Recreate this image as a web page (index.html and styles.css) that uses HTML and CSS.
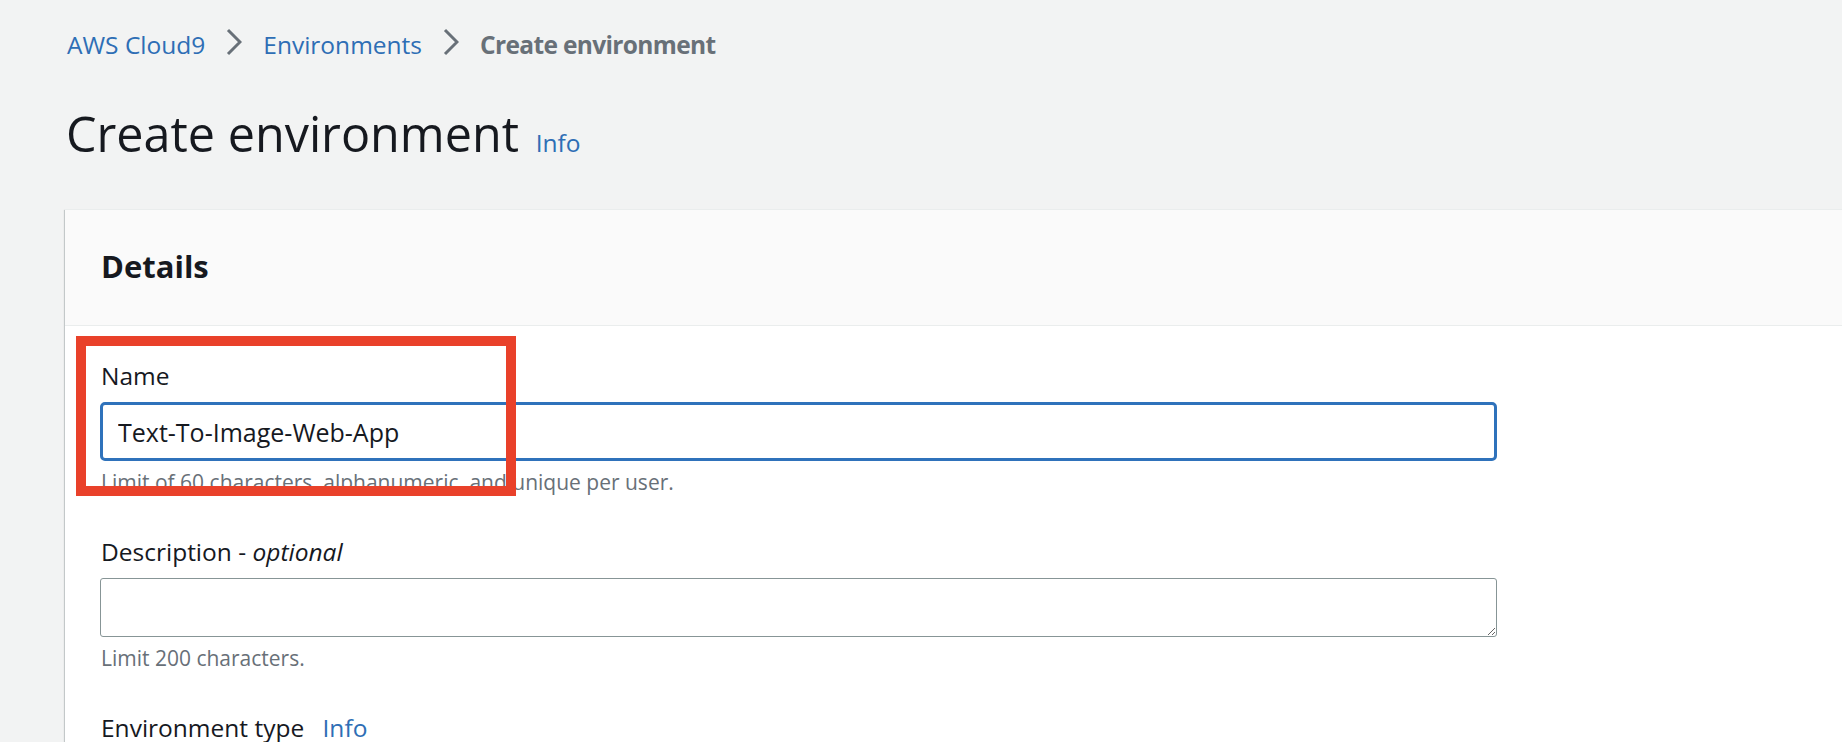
FILE: index.html
```html
<!DOCTYPE html>
<html lang="en">
<head>
  <meta charset="UTF-8">
  <title>Create environment – AWS Cloud9</title>
  <link rel="stylesheet" href="styles.css">
</head>
<body>
  <div class="page">
    <nav class="crumbs">
      <a href="#">AWS Cloud9</a>
      <svg class="chev" viewBox="0 0 16 28" width="16" height="28"><path d="M2 2 L14 14 L2 26" fill="none" stroke="#687078" stroke-width="3"/></svg>
      <a href="#">Environments</a>
      <svg class="chev" viewBox="0 0 16 28" width="16" height="28"><path d="M2 2 L14 14 L2 26" fill="none" stroke="#687078" stroke-width="3"/></svg>
      <span class="current">Create environment</span>
    </nav>

    <h1>Create environment <a href="#" class="info">Info</a></h1>

    <div class="card">
      <div class="card-head">
        <h2>Details</h2>
      </div>
      <div class="card-body">
        <div class="field field-name">
          <label for="env-name">Name</label>
          <input type="text" id="env-name" value="Text-To-Image-Web-App">
          <div class="hint">Limit of 60 characters, alphanumeric, and unique per user.</div>
          <div class="callout"></div>
        </div>

        <div class="field">
          <label for="env-desc">Description - <em>optional</em></label>
          <textarea id="env-desc"></textarea>
          <div class="hint">Limit 200 characters.</div>
        </div>

        <div class="field">
          <label>Environment type <a href="#" class="info">Info</a></label>
        </div>
      </div>
    </div>
  </div>
</body>
</html>
```

FILE: styles.css
```css
body {
  margin: 0;
  padding: 0;
  font-family: "Open Sans", "Noto Sans", sans-serif;
  color: #16191f;
  background: #f2f3f3;
  overflow: hidden;
}
a { color: #2e6eb5; text-decoration: none; }

.page { padding: 29px 0 0 65px; }

.crumbs { display: flex; align-items: center; font-size: 24.5px; line-height: 32px; padding-left: 2px; }
.crumbs .chev { margin: -6px 21px 0; }
.crumbs .current { color: #687078; font-weight: 700; letter-spacing: -0.65px; }

h1 {
  margin: 44px 0 0;
  padding-left: 1px;
  font-size: 48.5px;
  line-height: 56px;
  font-weight: 400;
}
h1 .info { font-size: 24.5px; margin-left: 4px; }

.card {
  margin-top: 38px;
  background: #fff;
  border-top: 1px solid #eaeded;
  box-shadow: 0 1px 1px 0 rgba(0,28,36,.3), -1px 1px 1px 0 rgba(0,28,36,.15);
  min-height: 600px;
}
.card-head {
  background: #fafafa;
  padding: 36px 36px 39px;
  border-bottom: 1px solid #eaeded;
}
h2 { margin: 0; font-size: 31px; line-height: 40px; font-weight: 700; }

.card-body { padding: 34px 36px 0; }

.field { position: relative; margin-bottom: 40px; }
.field label { display: block; font-size: 24.5px; line-height: 32px; margin-bottom: 10px; }
.field label .info { margin-left: 12px; }
.field input,
.field textarea {
  display: block;
  box-sizing: border-box;
  width: 1397px;
  margin: 0 0 0 -1px;
  font-family: inherit;
  color: #16191f;
  background: #fff;
  outline: none;
}
.field input {
  height: 59px;
  padding: 0 15px;
  font-size: 25px;
  border: 3px solid #2f72bb;
  border-radius: 5px;
}
.field textarea {
  height: 59px;
  padding: 8px 15px;
  font-size: 24px;
  border: 1px solid #879596;
  border-radius: 3px;
  resize: vertical;
}
.hint { margin-top: 7px; font-size: 21px; line-height: 28px; color: #687078; }

.callout {
  position: absolute;
  top: -24px;
  left: -25px;
  width: 420px;
  height: 140px;
  border: 10px solid #e9412a;
}
```
